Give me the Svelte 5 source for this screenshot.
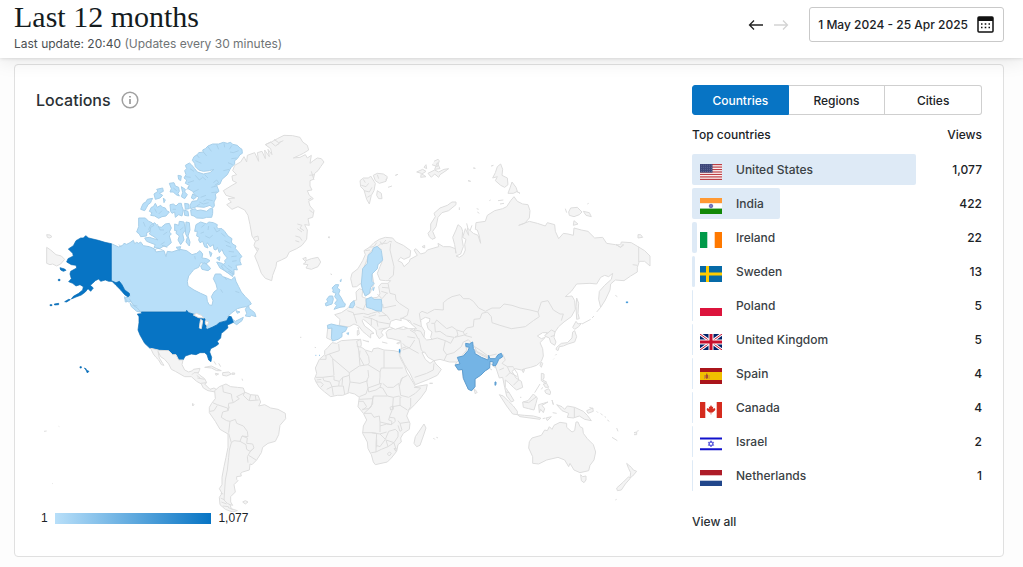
<script lang="ts">
    type Country = { code: string; name: string; views: number };

    const tabs = ['Countries', 'Regions', 'Cities'];
    let activeTab = $state('Countries');

    const countries: Country[] = [
        { code: 'us', name: 'United States', views: 1077 },
        { code: 'in', name: 'India', views: 422 },
        { code: 'ie', name: 'Ireland', views: 22 },
        { code: 'se', name: 'Sweden', views: 13 },
        { code: 'pl', name: 'Poland', views: 5 },
        { code: 'gb', name: 'United Kingdom', views: 5 },
        { code: 'es', name: 'Spain', views: 4 },
        { code: 'ca', name: 'Canada', views: 4 },
        { code: 'il', name: 'Israel', views: 2 },
        { code: 'nl', name: 'Netherlands', views: 1 }
    ];

    const maxViews = Math.max(...countries.map((c) => c.views));
    const format = (n: number) => n.toLocaleString('en-US');

    // Each region has its own origin on the map; shapes are drawn at 3 units per map unit.
    const regions = [
        {
            // North America
            x: 30,
            y: 130,
            shapes: [
                { fill: 'low', d: 'M244 341L266 351 278 346 282 340 290 343 300 338 310 331 314 341 320 337 326 340 332 336 340 347 358 350 374 357 378 366 402 362 408 380 412 364 426 366 450 358 470 362 486 374 500 370 510 362 518 372 516 384 530 386 540 392 528 402 512 398 506 412 492 418 484 428 476 438 472 454 474 468 492 480 512 490 530 498 532 514 538 525 546 526 549 512 544 500 552 486 562 478 558 462 550 446 556 432 572 432 578 440 590 444 604 450 614 440 618 454 626 470 634 486 646 500 658 512 664 522 650 530 636 532 622 536 606 548 592 560 600 560 608 568 616 574 640 562 636 572 620 584 608 576 598 558 590 572 566 578 560 585 540 596 528 596 524 576 512 560 490 552 470 545 334 545 322 541 312 526 302 514 294 516 284 504 300 500 292 486 276 466 268 454 258 460 244 452Z' },
                { fill: 'low', d: 'M487 91L492 80 502 74 506 68 520 66 518 60 526 56 534 48 548 42 566 42 580 37 592 40 602 37 608 43 622 46 630 54 636 58 637 70 630 74 622 86 614 92 614 102 604 112 600 118 592 134 576 148 570 162 560 166 567 184 556 192 558 204 552 216 553 228 548 234 540 226 522 232 500 230 482 236 480 226 486 214 502 212 506 202 494 194 488 184 474 176 478 166 466 160 470 150 462 144 468 134 464 122 470 116 466 106 478 99 484 104 494 116 502 126 520 132 540 128 552 118 538 122 520 124 506 120 496 110 494 100Z' },
                { fill: 'low', d: 'M482 240L496 236 500 242 512 240 530 244 540 236 548 236 548 250 545 262 530 262 520 265 500 264 492 258 484 256Z' },
                { fill: 'low', d: 'M332 238L336 228 340 220 348 216 352 208 368 205 364 212 362 218 354 224 350 232 344 242Z M358 244L364 232 370 230 376 220 382 232 392 226 398 232 406 234 410 242 418 246 408 258 396 260 386 265 374 258 362 256 366 248Z M372 192L384 184 380 178 398 174 400 184 388 190 398 196 390 204 376 208Z M418 160L432 158 436 168 446 172 448 184 444 190 448 198 438 194 430 186 420 186 424 176Z M454 170L466 178 464 186 472 194 464 206 454 200 458 188Z M420 224L430 222 438 228 446 220 454 220 456 230 460 240 456 258 446 254 436 262 434 246 426 250 422 244Z M464 220L476 222 478 236 466 238Z M444 136L454 138 452 152 446 148Z M462 240L474 244 476 258 464 256Z M400 204L406 210 402 218Z M488 192L500 200 492 208 484 204Z' },
                { fill: 'low', d: 'M326 264L346 264 356 274 366 278 372 286 362 292 360 304 350 308 350 318 332 320 328 312 320 306 326 290Z M362 286L374 278 384 290 394 292 406 282 418 280 424 294 418 306 424 312 418 318 424 338 410 350 402 348 388 356 372 352 376 344 350 334 344 324 358 322 384 330 372 320 358 312 362 304 356 298Z M434 282L446 286 448 274 462 276 466 300 458 312 462 330 452 344 444 330 448 318 438 310 440 302 434 302Z M468 276L478 278 480 300 474 318 480 336 478 348 468 336 472 322 466 310Z M438 352L452 350 448 362Z' },
                { fill: 'low', d: 'M498 284L512 276 530 282 536 276 550 278 562 284 560 292 566 296 576 296 584 304 594 318 606 326 604 336 608 342 618 348 616 356 622 362 636 380 630 384 630 394 634 404 618 406 622 420 612 418 612 434 596 424 592 428 582 420 574 408 586 398 584 392 592 384 582 372 576 358 568 368 562 352 558 360 552 358 550 344 540 350 532 338 530 344 534 354 524 350 518 334 510 338 506 330 508 322 500 318 502 304 494 304Z M512 408L522 398 534 406 542 416 534 422 516 418Z M538 364L546 370 542 380Z M560 384L570 380 568 392Z M560 396L576 400 590 414 610 428 608 440 590 426 570 414Z' },
                { fill: 'low', d: 'M646 538L650 532 656 528 658 536 664 540 674 548 678 560 664 556 660 560 646 558 650 550Z M300 518L306 524 322 534 332 546 320 544 304 530Z M284 500L290 516 286 516Z M618 542L630 546 622 550Z' },
                { fill: 'fjord', d: 'M500 74L508 84 M520 66L530 78 M534 50L544 64 M560 44L566 58 M582 40L584 52 M606 46L598 58 M626 62L610 68 600 66 M620 84L604 86 M608 104L594 98 M598 118L580 122 M496 92L514 100 M480 116L492 124 M466 140L482 142 M474 158L492 152 M496 136L508 150 516 144 M516 140L528 150 M524 134L534 144 M490 186L506 178 M560 168L544 172 M562 186L544 188 M550 158L560 150 566 158 554 166 M528 196L512 202 M548 212L530 208 520 214 M508 216L520 222 536 218 M500 228L510 222 M470 180L476 168 M386 252L396 242 M374 236L380 248 M428 238L438 238 M440 182L430 174 M382 282L390 300 402 300 M400 314L412 306 M392 344L404 336 M340 276L346 290 M450 300L460 292 M514 292L524 284 M536 288L534 300 M552 292L560 306 570 300 M574 310L586 320 M584 332L600 340 M588 346L604 352 M596 364L612 366 M604 380L620 378 M606 394L620 392 M594 406L606 414 M526 318L538 324 548 316 M512 310L522 306 M374 360L384 354 398 360 M396 346L412 352 M266 344L274 350 M494 378L496 388 M582 440L590 450 M628 488L616 484 M572 478L578 488 M268 454L280 480 296 496 M304 516L298 506 M312 526L322 528' },
                { fill: 'max', d: 'M115 357L130 347 138 332 152 324 160 324 167 317 176 324 205 331 225 337 244 341 244 452 258 458 268 454 276 464 284 480 298 490 299 496 294 501 284 494 272 480 258 466 246 454 236 454 226 450 212 454 206 447 196 452 188 460 181 466 190 474 182 484 174 476 166 486 154 495 138 501 124 507 130 499 146 490 158 480 160 470 150 464 138 468 128 460 116 455 124 446 120 432 122 424 140 414 138 406 124 404 110 396 114 386 130 378 128 370Z' },
                { fill: 'max', d: 'M90 413L104 417 108 421 100 424 92 420Z M104 515L116 508 121 509 110 516Z M60 524H66V527H60Z M73 522L86 520 86 524 74 525Z M85 448H90V452H85Z M150 710H154V714H150Z M163 714L169 717 168 720Z M168 720L177 724 172 729Z' },
                { fill: 'max', d: 'M334 546L468 546 470 541 476 548 492 553 505 555 500 562 512 562 524 566 530 580 527 595 532 598 548 591 560 585 568 578 590 572 597 559 604 560 610 577 600 582 592 585 594 593 582 604 574 610 572 624 562 634 566 642 558 648 542 656 539 666 545 682 543 695 536 690 531 674 524 668 510 668 498 674 484 672 466 678 459 690 446 690 438 674 428 674 416 662 404 664 386 660 360 655 344 640 330 615 324 600 327 578 327 560 322 552 334 551Z' },
                { fill: 'water', d: 'M490 555L500 550 514 556 522 564 506 563Z M512 568L518 572 514 596 508 594 510 578Z M526 572L536 576 532 588 526 582Z' },
                { fill: 'none', d: 'M362 655L376 658 388 661 416 662 428 674 438 674 446 690 459 690 456 704 464 720 476 726 488 722 490 718 510 715 508 722 504 730 510 736 524 746 530 758 524 762 540 778 552 774 562 780 556 786 534 782 520 774 514 762 500 754 484 740 464 740 436 724 424 718 416 702 404 688 392 680 384 664 388 684 398 700 402 706 394 704 386 690 378 682 370 672Z M524 712L544 708 560 716 574 722 560 722 544 714Z M578 728L596 726 604 732 590 738 578 736Z M556 730L566 732 558 736Z M606 729H614V733H606Z M552 694L558 704 M566 700L572 710 M488 820L492 824 488 828Z M636 746L638 752' },
                { fill: 'line', d: 'M486 734L492 728 504 728 M500 736L510 744 M502 744L524 748 M512 760L530 758' },
                { fill: 'none', d: 'M50 352L62 360 78 374 94 378 104 388 92 402 80 408 68 402 60 404 50 400Z M50 314L60 315 66 320 58 324 52 322Z' }
            ]
        },
        {
            // Greenland and Iceland
            x: 200,
            y: 130,
            shapes: [
                { fill: 'none', d: 'M70 182L96 166 110 158 98 152 96 138 110 134 98 122 104 106 122 96 132 80 140 96 142 76 164 68 176 94 172 68 186 64 196 86 194 60 208 80 204 58 216 74 212 56 196 44 214 36 232 26 252 16 278 17 300 22 308 36 322 46 326 60 310 70 298 76 280 84 300 82 316 74 322 84 334 76 330 100 340 92 352 84 364 86 372 96 362 110 354 122 344 130 340 148 330 152 330 168 336 180 322 182 328 196 340 206 326 214 330 228 342 242 338 262 324 266 328 286 314 284 322 300 320 328 306 346 290 356 268 366 260 382 244 390 230 396 228 410 218 436 215 452 196 445 184 430 174 402 164 378 172 364 162 346 166 334 156 318 150 284 144 256 134 240 114 230 96 238 80 224 94 216 84 206 104 204 78 196Z' },
                { fill: 'line', d: 'M196 44L212 36 226 48 238 40 M222 28L236 38 250 32 M230 46L242 36 M286 318L300 322 306 332 M286 332L298 336 M292 282L306 286 300 294 312 302 M292 296L306 306 M162 322L174 318 176 330 166 334 M164 352L176 356 172 364 M328 136L344 134 M334 124L342 150 M324 210L334 204 M328 240L338 248' },
                { fill: 'none', d: 'M308 386L318 382 318 392 334 386 354 382 362 396 354 410 334 418 318 414 324 404 310 402 318 396Z M384 322L388 320 388 324Z M392 432L396 434Z' }
            ]
        },
        {
            // Eurasia
            x: 300,
            y: 150,
            shapes: [
                { fill: 'none', d: 'M158 411L152 386 156 370 174 356 188 332 196 314 192 302 208 292 222 278 238 268 256 262 278 264 288 276 310 286 332 302 330 320 312 328 302 322 294 332 306 338 312 350 328 336 330 328 352 316 342 300 348 296 362 312 376 308 382 300 402 294 416 290 414 280 430 290 450 290 466 296 468 310 464 284 458 262 468 240 474 224 484 232 488 244 486 266 490 290 482 312 468 318 478 322 490 314 496 300 494 284 498 268 488 262 496 236 506 256 502 234 520 250 534 256 542 280 538 258 532 240 526 238 528 218 556 214 562 196 584 182 608 176 620 170 632 152 642 140 652 154 668 162 684 164 690 182 688 204 674 220 656 226 688 214 712 220 736 228 742 218 764 224 766 244 776 266 790 250 804 252 820 256 822 234 844 240 864 244 884 264 908 262 920 280 946 284 962 284 964 276 994 278 1014 290 1034 302 1050 318 1050 348 1034 334 1018 334 1012 352 1012 366 992 378 972 392 946 390 932 402 930 420 916 450 902 472 896 448 898 424 914 406 934 388 938 370 926 380 914 376 902 382 890 402 870 400 830 402 814 424 796 440 816 438 824 452 826 478 814 500 792 516 776 530 765 546 762 562 768 576 764 586 752 578 748 564 734 558 742 548 728 548 712 558 724 566 736 562 720 578 728 596 730 618 724 634 710 646 692 652 674 656 664 660 646 656 636 664 648 684 664 694 668 712 650 720 640 712 626 698 616 690 616 712 630 732 642 752 634 756 620 738 614 712 608 682 598 684 592 666 586 648 566 640 568 654 540 675 525 687 525 710 515 722 505 718 490 685 487 660 475 660 465 645 470 636 448 636 434 632 420 628 402 632 384 622 374 606 366 608 376 628 390 640 402 632 408 642 424 658 412 676 386 688 346 704 340 692 330 670 314 644 300 616 304 592 302 572 290 570 276 566 262 564 258 548 264 540 284 534 310 538 328 534 346 544 334 520 330 512 310 508 304 518 290 510 278 514 270 530 258 536 248 540 244 548 250 556 238 566 230 554 228 540 214 528 198 514 190 508 186 512 194 528 210 540 222 550 212 552 212 564 200 554 188 544 176 528 162 522 148 530 132 530 118 550 110 566 98 572 80 564 84 526 118 526 120 508 104 494 124 488 142 476 150 466 162 452 170 450 168 426 178 416 188 420 186 440 200 446 232 442 240 432 236 410 244 400 264 400 272 392 256 392 240 390 232 370 240 350 248 330 232 346 216 370 222 402 210 430 196 438 186 412 182 400 170 410Z' },
                { fill: 'water', d: 'M268 530L272 514 288 508 304 512 302 504 318 508 332 520 350 536 326 536 310 530 286 538Z M362 510L376 502 390 506 388 516 380 520 384 536 396 546 392 562 396 568 380 570 372 562 374 544 364 528Z' },
                { fill: 'line', d: 'M188 378L188 360 200 332 208 310 222 294 232 290 246 300 M232 290L244 280 262 280 268 274 276 276 M272 280L270 300 282 350 280 376 266 388 M208 292L222 290 230 278 M196 302L210 300 M240 274L246 284 258 270' },
                { fill: 'line', d: 'M246 412L266 414 M244 424L264 430 M264 400L270 430 286 434 288 450 M246 446L260 430 M248 462L250 474 288 466 M288 450L298 460 326 478 322 496 304 506 M244 484L262 498 270 510 M236 498L262 496 M214 490L236 484 M190 478L198 460 198 446 M168 470L194 480 M160 494L190 490 M142 482L160 488 164 500 170 520 M190 490L204 494 214 490 M190 500L216 506 236 516 270 522 M214 506L214 526 M230 510L234 530 M236 538L260 534 M206 500L228 494 M94 530L96 562 M118 526L140 530 M232 432L246 446 M226 480L240 490' },
                { fill: 'line', d: 'M362 516L360 504 358 490 366 484 382 490 404 478 430 480 430 458 442 448 456 440 480 434 490 446 508 446 520 454 536 474 556 484 576 474 600 474 612 462 636 466 660 474 690 480 714 486 724 456 744 452 760 480 780 492 790 492 784 512 M714 486L718 500 700 512 676 530 634 536 600 526 576 518 574 500 562 486 M562 486L546 490 540 506 522 508 520 530 500 534 490 546 470 540 456 530 440 536 410 510 404 520 394 520 M340 520L364 530 M346 540L362 544 372 562 M330 540L346 550 354 566 M470 540L474 556 464 562 490 556 502 550 M404 520L406 546 420 544 440 558 462 562 452 580 436 572 412 564 396 568 M356 564L364 600 374 610 M436 572L430 600 440 614 432 632 M440 614L462 608 484 590 490 576 504 570 M490 546L494 556 516 562 M504 568L524 590 540 600 564 618 590 612 M524 590L530 604 566 622 M344 570L330 592 308 600 M322 560L346 564 M308 580L318 590 M302 596L320 590 356 610 M344 682L380 670 400 660 402 640 M472 636L490 612 500 600 496 584 M608 612L616 630 606 640 622 650 640 650 M598 660L612 654 M622 650L630 668 652 680 M630 668L618 680 M640 652L652 670 656 690 640 706 M740 552L754 540 766 546 M752 560L764 556' },
                { fill: 'none', d: 'M180 92L190 84 206 84 212 78 222 94 226 100 222 122 214 136 208 162 200 148 192 120 182 110Z M220 76L232 70 250 72 262 80 258 94 238 100 226 92Z M232 122L244 130 246 146 236 146 230 136Z M286 76L294 73Z M264 112L276 108 M256 90L262 86' },
                { fill: 'line', d: 'M184 106L198 110 206 100 M192 122L208 126 216 112 M202 142L212 136 M190 88L196 98 M232 74L236 86' },
                { fill: 'none', d: 'M350 66L368 58 378 64 366 72 378 80 362 82 364 70Z M372 52L378 44 380 56Z M384 70L404 60 416 66 432 58 446 56 438 62 420 74 416 82 404 72 394 82Z M396 44L412 50 418 32 414 28 402 34 M412 38L420 56 404 58Z M520 54L526 55Z M504 92L512 94Z' },
                { fill: 'none', d: 'M384 250L392 240 392 222 406 200 402 190 420 174 442 166 456 156 468 156 468 164 446 182 426 188 414 202 408 230 398 244 406 264 396 268 388 260Z M366 290L374 286 374 294Z M478 172V180 M532 186L538 190 M568 152L572 150 M530 176L536 178 M594 152L610 150 M600 162L612 160 M500 220L504 236 M516 226L510 242' },
                { fill: 'none', d: 'M586 68L592 50 602 42 608 58 606 76 622 84 624 104 614 112 602 106 586 92 592 80 578 84Z M624 130L630 114 636 96 648 112 652 124 640 130Z M650 124L660 130Z M574 48L580 46Z M806 186L812 174 832 172 846 186 838 194 822 200 808 196Z M850 184L868 188 874 200 858 196Z M822 212L834 222 820 226Z M796 176L800 188 M862 162L866 160 M1014 254L1022 254 1028 262 1014 264Z M948 284L962 292 972 284' },
                { fill: 'line', d: 'M1016 290V336 M948 284L962 292 970 282 M998 344L1012 346' },
                { fill: 'low', d: 'M188 356L202 340 204 316 216 306 220 294 232 289 244 302 248 330 234 344 232 356 216 372 216 394 222 400 212 412 208 430 196 438 188 420 184 402Z M218 416L223 412 220 422Z M198 448L214 441 222 448 244 448 246 468 244 484 228 482 214 476 200 472Z M82 526L94 522 110 526 142 532 136 544 126 548 126 560 114 568 98 573 94 564 96 534 84 536Z M140 550L146 548 145 554Z M148 474L152 460 162 452 164 464 158 474 150 472Z' },
                { fill: 'low', d: 'M96 414L106 404 116 404 112 414 120 420 116 432 124 444 130 456 136 462 134 470 120 472 102 478 110 466 104 460 112 450 104 440 108 430 98 426 100 420Z M80 448L88 438 98 438 100 448 96 462 78 468 76 460 84 456Z M120 392L124 388 122 396Z' }
            ]
        },
        {
            // Africa
            x: 300,
            y: 290,
            shapes: [
                { fill: 'none', d: 'M96 158L110 160 124 152 150 150 182 148 184 164 182 170 196 180 216 186 220 176 234 174 252 180 282 182 298 186 298 196 304 210 314 228 320 246 330 262 342 282 346 290 382 284 378 302 362 324 344 344 326 362 320 378 330 400 328 418 310 430 302 444 304 456 294 464 290 484 274 504 262 516 226 524 220 516 214 494 204 476 202 456 188 430 190 408 200 390 190 370 174 350 176 336 178 322 164 312 148 308 128 316 112 316 92 320 74 306 58 292 48 276 44 266 50 250 46 234 58 208 74 194 74 182 84 172Z M346 440L360 420 372 402 378 414 370 438 360 466 350 470 342 460Z' },
                { fill: 'line', d: 'M116 162L118 182 88 192 74 198 M60 208L78 208 78 198 M88 192L98 206 102 256 M98 206L148 248 148 256 128 262 118 274 102 270 102 258 68 262 48 262 M148 248L178 228 204 224 M182 148L170 154 176 180 180 226 M170 168L182 172 M204 224L208 218 206 200 196 182 M180 182L178 200 192 226 M204 224L240 246 M252 182V234 M252 234H308 M240 246L244 234H252 M240 246V262L238 282 L204 294 L200 272 L206 260 L204 240 M148 256L150 276 180 280 204 272 M150 276L144 308 M128 262L126 286 M118 274L116 288 130 288 134 312 M96 290L100 316 M96 290L116 288 M68 262L72 272 90 276 96 290 80 298 M48 276L62 276 70 284 62 292 M50 270L64 268 M204 294L198 312 178 320 M204 294L206 306 228 300 240 292 248 294 M240 292L244 280 238 282 M248 294L262 318 M248 280L262 292 280 292 296 280 298 290 304 266 322 256 M308 262L300 280 M262 318L280 322 298 318 304 324 M298 290L302 316 326 322 346 310 362 294 342 292 M332 324V350 L324 362 M300 322L300 346 322 360 M300 346L278 350 M262 318L220 318 218 326 178 328 M218 326L218 342 206 356 186 358 M220 318L214 350 192 370 M192 370L214 370 222 382 238 378 240 396 274 404 276 394 266 390 270 376 276 362 278 350 280 322 M176 334H190 L200 350 L188 360 M240 396L240 426 M188 428L214 428 240 432 260 426 M214 428L230 430 228 464 228 486 214 488 M230 448L230 472 M240 432L256 448 240 470 228 466 M256 448L266 424 286 418 294 426 294 440 282 458 258 450 M240 408L260 402 274 404 286 394 284 384 270 382 M294 392L300 400 328 396 M300 400L306 420 300 424 294 406 M258 450L264 470 244 478 228 486 M264 470L282 458 288 478 M262 492L268 486 274 490 268 498Z M282 476L288 474 288 484Z M270 352L280 348 280 358 272 360Z' },
                { fill: 'none', d: 'M188 150L206 156 204 152 M172 122L176 120 178 132 172 136Z M174 112L176 118Z M246 156L262 160 M290 160L302 154 296 162Z M390 280L398 280 M402 446L404 448 M410 443L412 441 M44 172L48 173 M0 142L4 142' },
                { fill: 'spot', d: 'M297 178L300 177 301 183 299 190 297 186Z' },
                { fill: 'mid', d: 'M46 196L49 196 M57 196L60 196' }
            ]
        },
        {
            // South and east Asia, Oceania
            x: 430,
            y: 300,
            shapes: [
                { fill: 'none', d: 'M298 425L306 414 334 406 344 390 352 392 358 380 366 388 372 376 390 367 410 370 410 382 426 396 434 392 438 366 444 366 450 380 458 384 460 400 472 416 490 434 497 456 492 480 480 496 476 512 450 518 432 510 420 490 416 500 404 480 384 472 350 480 326 492 308 490 308 470 296 444Z M452 524L458 530 468 528 468 540 462 548 454 542Z' },
                { fill: 'none', d: 'M208 284L220 288 236 304 250 318 262 334 262 344 248 342 230 318Z M262 344L284 346 310 348 332 354 330 358 300 354 270 350Z M278 306L294 302 310 282 322 294 318 310 312 330 296 326 280 322Z M326 314L340 310 354 306 336 316 344 326 340 338 332 328 328 338Z M366 300L370 314Z M380 314L396 320 404 328 412 318 434 322 460 334 472 346 484 362 464 358 448 348 430 354 412 352 416 340 396 332Z M470 332L488 324 490 334 474 340Z M348 354L364 350 352 362Z M338 356L346 354 M368 338L380 340 M490 326L478 322' },
                { fill: 'none', d: 'M334 220L342 222 342 234 338 240 350 246 346 250 334 242Z M340 252L350 250 356 262 346 262Z M344 272L356 266 362 276 360 284 348 280Z M330 252L314 278 M338 262L334 268 M334 186L338 190 334 202 330 196Z M276 210L284 208 280 218Z M132 266L142 276 136 282Z M270 292L274 292' },
                { fill: 'none', d: 'M380 142L394 130 412 128 426 114 428 96 434 92 440 110 434 126 414 132 400 138 388 140 384 152 378 148Z M428 82L438 64 444 72 454 70 446 80 434 88Z M440 -6L446 10 444 40 448 56 440 58 438 20Z M456 72L482 58 M486 54L492 48 M500 36L512 22 M370 178L372 176 M376 166L380 162 M556 -14L562 -10' },
                { fill: 'none', d: 'M590 490L604 502 610 510 620 514 608 528 600 534 602 518 596 506Z M596 530L600 536 586 552 574 570 562 572 560 564 580 546Z M556 600L560 598 M546 412L562 422 M560 384L564 394 M512 340L518 346 M524 350L528 352 M532 360L538 364 M500 334L504 338 M612 398L620 396 620 404 612 404 M620 394L626 392 M10 414L14 418 M20 412L24 414 M-2 250L8 250' },
                { fill: 'line', d: 'M433 322V354 M280 306L296 308 320 290 M228 276L238 278' },
                { fill: 'india', d: 'M107 130L118 132 128 126 130 146 136 154 134 160 154 172 174 180 176 166 180 176 196 176 204 164 214 160 218 170 206 178 202 188 196 198 188 196 190 186 180 184 179 204 166 212 152 226 135 237 135 260 125 272 115 268 100 235 97 208 85 210 75 195 90 192 82 172 100 168 114 152 118 142 108 140Z M195 246L198 246 198 254 195 256Z' },
                { fill: 'line', d: 'M134 152L152 164 174 174 M188 198L198 204 M180 206L186 210' },
                { fill: 'spot', d: 'M588 5H594V9H588Z' }
            ]
        },
        {
            // South America
            x: 30,
            y: 370,
            shapes: [
                { fill: 'none', d: 'M545 100L556 86 554 62 568 50 588 42 602 50 622 52 640 54 644 66 662 74 684 76 692 96 686 108 704 104 722 114 744 118 766 130 767 146 750 166 746 194 736 214 714 220 698 232 694 248 680 270 666 284 660 282 658 300 638 306 632 310 634 318 620 320 620 328 624 332 612 344 616 366 602 380 602 396 608 406 600 404 604 416 622 422 608 426 586 418 570 404 568 382 576 370 568 356 576 344 576 322 582 290 588 262 594 232 594 192 570 178 556 154 538 128 538 112Z M638 396L646 392 654 396 646 402Z' },
                { fill: 'line', d: 'M578 48L580 66 604 72 606 86 610 98 596 100 594 122 598 110 M548 98L562 104 592 114 594 122 578 126 574 142 590 152 600 154 596 188 M610 98L628 86 620 80 644 68 M644 66L640 76 654 90 660 92 686 90 M662 74L658 90 M676 76L678 90 M600 154L616 148 620 160 640 168 652 184 654 200 636 198 630 214 612 212 604 218 596 190 M636 198L652 204 650 220 668 222 672 234 660 244 650 238 648 224 630 214 M672 234L660 246 652 260 654 278 M656 256L678 270 M604 218L598 240 596 262 592 300 586 330 584 360 582 390 592 400 600 404 M540 124L552 122 562 106 M572 370L580 372 M572 384L584 390 M574 396L590 402 M578 408L596 410 M594 412L610 420' },
                { fill: 'none', d: 'M42 184L50 183 M86 169L88 170 M66 340L68 341 M486 103L490 105' }
            ]
        }
    ];
</script>

{#snippet flag(code: string)}
    <svg class="flag" viewBox="0 0 22 16" aria-hidden="true">
        {#if code === 'us'}
            <rect width="22" height="16" fill="#fff" />
            {#each [0, 1, 2, 3, 4, 5, 6] as i}
                <rect y={i * 2.46} width="22" height="1.23" fill="#bd3d44" />
            {/each}
            <rect width="12.5" height="8.6" fill="#3d477a" />
            {#each [1.2, 3.3, 5.4, 7.5] as y}
                <path d="M1 {y}H12" stroke="#7f87ad" stroke-width=".6" stroke-dasharray=".8 1.2" />
            {/each}
        {:else if code === 'in'}
            <rect width="22" height="5.4" fill="#ff9933" />
            <rect y="5.4" width="22" height="5.2" fill="#fff" />
            <rect y="10.6" width="22" height="5.4" fill="#128807" />
            <circle cx="11" cy="8" r="1.8" fill="#7778c0" stroke="#3d3d9c" stroke-width=".6" />
        {:else if code === 'ie'}
            <rect width="22" height="16" fill="#fff" />
            <rect width="7.3" height="16" fill="#009a49" />
            <rect x="14.7" width="7.3" height="16" fill="#ff7900" />
        {:else if code === 'se'}
            <rect width="22" height="16" fill="#066aa7" />
            <path d="M0 8H22M7.5 0V16" stroke="#fecc00" stroke-width="3" />
        {:else if code === 'pl'}
            <rect width="22" height="8" fill="#fff" />
            <rect y="8" width="22" height="8" fill="#dc143c" />
        {:else if code === 'gb'}
            <rect width="22" height="16" fill="#012169" />
            <path d="M0 0L22 16M22 0L0 16" stroke="#fff" stroke-width="3" />
            <path d="M0 0L22 16M22 0L0 16" stroke="#c8102e" stroke-width="1" />
            <path d="M11 0V16M0 8H22" stroke="#fff" stroke-width="5" />
            <path d="M11 0V16M0 8H22" stroke="#c8102e" stroke-width="3" />
        {:else if code === 'es'}
            <rect width="22" height="16" fill="#aa151b" />
            <rect y="4" width="22" height="8" fill="#f1bf00" />
            <path d="M4.5 7V11M9 7V11" stroke="#b9854c" stroke-width=".8" />
            <path d="M5.5 7H8V10L6.8 11 5.5 10Z" fill="#ad4a2c" />
            <circle cx="6.8" cy="6.2" r=".8" fill="#a0522d" />
        {:else if code === 'ca'}
            <rect width="22" height="16" fill="#fff" />
            <path d="M0 0H5.3V16H0ZM16.7 0H22V16H16.7Z" fill="#d52b1e" />
            <path d="M11 3L12.1 5 13.2 4.6 12.8 7 14.3 5.9 15.4 7 14.9 8.4 12.6 10.5 11.3 10.4V12.5H10.7V10.4L9.4 10.5 7.1 8.4 6.6 7 7.7 5.9 9.2 7 8.8 4.6 9.9 5Z" fill="#d52b1e" />
        {:else if code === 'il'}
            <rect width="22" height="16" fill="#fff" />
            <path d="M0 2.4H22M0 13.2H22" stroke="#1111cc" stroke-width="2" />
            <path d="M11 4.7L13.7 9.3H8.3ZM11 10.9L8.3 6.3H13.7Z" fill="none" stroke="#4343d6" stroke-width=".8" />
        {:else}
            <rect width="22" height="16" fill="#fff" />
            <rect width="22" height="5.3" fill="#ae1c28" />
            <rect y="10.7" width="22" height="5.3" fill="#21468b" />
        {/if}
    </svg>
{/snippet}

<header class="topbar">
    <div>
        <h1>Last 12 months</h1>
        <p class="updated">Last update: 20:40 <span>(Updates every 30 minutes)</span></p>
    </div>
    <div class="controls">
        <button class="arrow" aria-label="Previous period">
            <svg viewBox="0 0 16 12"><path d="M15 6H1.5M6 1.5L1.5 6 6 10.5" /></svg>
        </button>
        <button class="arrow" aria-label="Next period" disabled>
            <svg viewBox="0 0 16 12"><path d="M1 6H14.5M10 1.5L14.5 6 10 10.5" /></svg>
        </button>
        <button class="range">
            1 May 2024 - 25 Apr 2025
            <svg viewBox="0 0 17 17" aria-hidden="true">
                <rect x="1" y="1" width="15" height="15" rx="1" fill="none" stroke="#111" stroke-width="1.5" />
                <path d="M1 1H16V5H1Z" fill="#111" />
                <path d="M4 8H5.5M7.7 8H9.3M11.5 8H13M4 11.5H5.5M7.7 11.5H9.3M11.5 11.5H13" stroke="#111" stroke-width="1.6" />
            </svg>
        </button>
    </div>
</header>

<main>
    <section class="card">
        <div class="locations">
            <div class="heading">
                <h2>Locations</h2>
                <button class="info" aria-label="About locations">
                    <svg viewBox="0 0 18 18">
                        <circle cx="9" cy="9" r="7.8" fill="none" stroke="#a0a0a0" stroke-width="1.5" />
                        <path d="M9 8V13M9 5V6.5" stroke="#a0a0a0" stroke-width="1.8" />
                    </svg>
                </button>
            </div>
            <svg class="map" viewBox="36 124 632 388" role="img" aria-label="Views by country">
                {#each regions as region}
                    <g transform="translate({region.x} {region.y}) scale(.33333)">
                        {#each region.shapes as shape}
                            <path class={shape.fill} d={shape.d} />
                        {/each}
                    </g>
                {/each}
            </svg>
            <div class="legend">
                <span>1</span>
                <div class="scale"></div>
                <span>{format(maxViews)}</span>
            </div>
        </div>

        <div class="panel">
            <div class="tabs">
                {#each tabs as tab}
                    <button class:active={activeTab === tab} onclick={() => (activeTab = tab)}>{tab}</button>
                {/each}
            </div>
            <table>
                <thead>
                    <tr><th>Top countries</th><th class="views">Views</th></tr>
                </thead>
                <tbody>
                    {#each countries as country (country.code)}
                        <tr>
                            <td>
                                <div class="bar" style="width: {(country.views / maxViews) * 100}%"></div>
                                <div class="country">
                                    {@render flag(country.code)}
                                    <span>{country.name}</span>
                                </div>
                            </td>
                            <td class="views">{format(country.views)}</td>
                        </tr>
                    {/each}
                </tbody>
            </table>
            <button class="view-all">View all</button>
        </div>
    </section>
</main>

<style>
    :global(body) {
        background: #fdfdfd;
        color: #1b2226;
        font-family: Inter, 'Liberation Sans', sans-serif;
        font-size: 12px;
    }

    button {
        font: inherit;
        color: inherit;
        background: none;
        border: none;
        padding: 0;
        cursor: pointer;
    }

    .topbar {
        position: relative;
        display: flex;
        justify-content: space-between;
        align-items: flex-start;
        box-sizing: border-box;
        height: 58px;
        padding: 0 19px 0 14px;
        background: #fff;
        box-shadow: 0 2px 20px rgba(0, 0, 0, 0.1), 0 0 4px rgba(0, 0, 0, 0.16);
    }

    h1 {
        margin: 0;
        font-family: 'Liberation Serif', serif;
        font-size: 30px;
        font-weight: 400;
        line-height: 34px;
        color: #141b1e;
    }

    .updated {
        margin: 0;
        line-height: 20px;
        color: #4a4f52;
    }

    .updated span {
        color: #707476;
    }

    .controls {
        display: flex;
        align-items: center;
        gap: 9px;
        padding-top: 7px;
    }

    .arrow {
        width: 16px;
        height: 12px;
    }

    .arrow svg {
        display: block;
        fill: none;
        stroke: #222;
        stroke-width: 1.3;
    }

    .arrow:disabled svg {
        stroke: #d4d4d4;
    }

    .range {
        display: flex;
        align-items: center;
        gap: 9px;
        height: 35px;
        margin-left: 11px;
        padding: 0 9px 0 8px;
        border: 1px solid #c9c9c9;
        border-radius: 3px;
        font-weight: 500;
        white-space: nowrap;
    }

    .range svg {
        width: 17px;
        height: 17px;
    }

    main {
        padding: 6px 19px 11px 14px;
    }

    .card {
        display: grid;
        grid-template-columns: minmax(0, 1fr) 290px;
        gap: 24px;
        padding: 20px 21px 25px;
        border: 1px solid #e0e0e0;
        border-radius: 4px;
        background: #fff;
    }

    .heading {
        display: flex;
        align-items: center;
        gap: 10px;
        height: 30px;
        margin-bottom: 9px;
    }

    h2 {
        margin: 0;
        font-size: 16px;
        font-weight: 500;
        color: #2a3034;
    }

    .info,
    .info svg {
        display: block;
        width: 18px;
        height: 18px;
    }

    .map {
        display: block;
        width: 100%;
        height: auto;
    }

    .map path {
        stroke: #dddddd;
        stroke-width: 3;
        stroke-linejoin: round;
        fill: #f4f4f4;
    }

    .map path.line {
        fill: none;
    }

    .map path.fjord {
        fill: none;
        stroke: #a2c8e2;
        stroke-width: 2;
    }

    .map path.water {
        fill: #fff;
    }

    .map path.low {
        fill: #b8dff9;
        stroke: #a8cfe9;
    }

    .map path.mid {
        fill: #9ccbee;
        stroke: #8fc3ea;
    }

    .map path.india {
        fill: #74b4e5;
        stroke: #5c9dd0;
    }

    .map path.max {
        fill: #0774c4;
        stroke: #0669b3;
        stroke-width: 2;
    }

    .map path.spot {
        fill: #3f97da;
        stroke: #6bb0e4;
        stroke-width: 1;
    }

    .legend {
        display: flex;
        align-items: center;
        gap: 7px;
        height: 12px;
        padding-left: 5px;
        font-family: 'Liberation Sans', Arial, sans-serif;
        line-height: 12px;
    }

    .scale {
        width: 25%;
        height: 11px;
        background: linear-gradient(to right, #b8dff9, #0774c4);
    }

    .tabs {
        display: grid;
        grid-template-columns: repeat(3, 1fr);
        height: 30px;
    }

    .tabs button {
        border: 1px solid #cfcfcf;
        border-left-width: 0;
        background: #fff;
        font-weight: 500;
    }

    .tabs button:first-child {
        border-left-width: 1px;
        border-radius: 3px 0 0 3px;
    }

    .tabs button:last-child {
        border-radius: 0 3px 3px 0;
    }

    .tabs .active {
        background: #0774c4;
        border-color: #0774c4;
        color: #fff;
    }

    table {
        width: 100%;
        border-collapse: separate;
        border-spacing: 0 3px;
        table-layout: fixed;
    }

    th {
        height: 33px;
        padding: 0;
        font-weight: 500;
        text-align: left;
    }

    th:first-child {
        width: 224px;
    }

    td {
        position: relative;
        height: 31px;
        padding: 0;
        color: #3a4145;
        font-weight: 500;
    }

    .views {
        text-align: right;
        color: #1b2226;
    }

    .bar {
        position: absolute;
        top: 0;
        left: 0;
        height: 100%;
        min-width: 1px;
        border-radius: 2px;
        background: #deeaf6;
    }

    .country {
        position: relative;
        display: flex;
        align-items: center;
        gap: 14px;
        padding-left: 8px;
    }

    .flag {
        width: 22px;
        height: 16px;
        margin-top: 5px;
    }

    .view-all {
        display: block;
        margin-top: 19px;
        line-height: 18px;
        font-weight: 500;
        color: #2a3034;
    }
</style>
